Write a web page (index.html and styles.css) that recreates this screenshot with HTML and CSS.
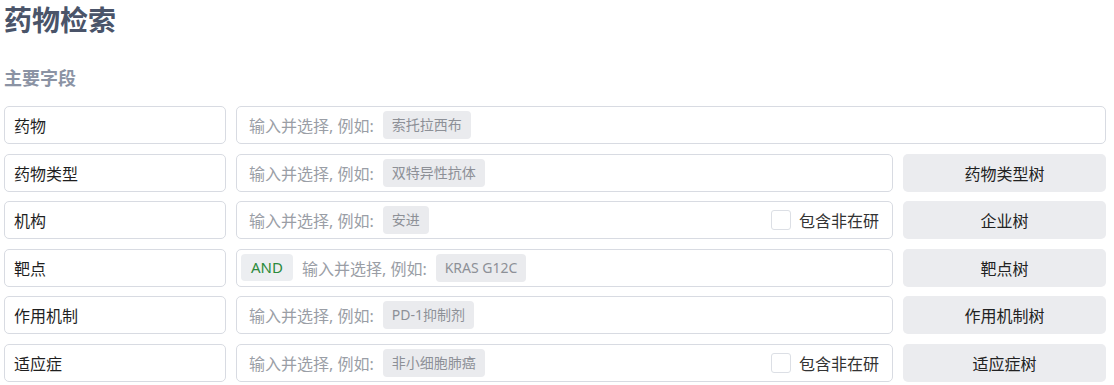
FILE: index.html
```html
<!DOCTYPE html>
<html lang="zh-CN">
<head>
  <meta charset="UTF-8" />
  <meta name="viewport" content="width=device-width, initial-scale=1.0" />
  <title>药物检索</title>
  <link rel="stylesheet" href="styles.css">
</head>
<body>
  <div class="page">
    <h1 class="title">药物检索</h1>
    <h2 class="section-title">主要字段</h2>

    <div class="fields">
      <div class="field-label">药物</div>
      <div class="field-input wide">
        <span class="placeholder">输入并选择, 例如:</span>
        <span class="chip">索托拉西布</span>
      </div>

      <div class="field-label">药物类型</div>
      <div class="field-input">
        <span class="placeholder">输入并选择, 例如:</span>
        <span class="chip">双特异性抗体</span>
      </div>
      <button class="tree-btn">药物类型树</button>

      <div class="field-label">机构</div>
      <div class="field-input">
        <span class="placeholder">输入并选择, 例如:</span>
        <span class="chip">安进</span>
        <label class="check"><span class="box"></span>包含非在研</label>
      </div>
      <button class="tree-btn">企业树</button>

      <div class="field-label">靶点</div>
      <div class="field-input">
        <span class="logic">AND</span>
        <span class="placeholder">输入并选择, 例如:</span>
        <span class="chip">KRAS G12C</span>
      </div>
      <button class="tree-btn">靶点树</button>

      <div class="field-label">作用机制</div>
      <div class="field-input">
        <span class="placeholder">输入并选择, 例如:</span>
        <span class="chip">PD-1抑制剂</span>
      </div>
      <button class="tree-btn">作用机制树</button>

      <div class="field-label">适应症</div>
      <div class="field-input">
        <span class="placeholder">输入并选择, 例如:</span>
        <span class="chip">非小细胞肺癌</span>
        <label class="check"><span class="box"></span>包含非在研</label>
      </div>
      <button class="tree-btn">适应症树</button>
    </div>
  </div>
</body>
</html>
```

FILE: styles.css
```css
body {
  margin: 0;
  font-family: "Noto Sans", "Noto Sans CJK SC", sans-serif;
  background: #fff;
  color: #222;
}
.page {
  padding: 0 8px 0 4px;
}
.title {
  margin: 0;
  font-size: 28px;
  line-height: 40px;
  font-weight: bold;
  color: #4a5469;
}
.section-title {
  margin: 25px 0 15px;
  font-size: 18px;
  line-height: 26px;
  font-weight: bold;
  color: #8b93a4;
}
.fields {
  display: grid;
  grid-template-columns: 222px 1fr 203px;
  grid-auto-rows: 38px;
  column-gap: 10px;
  row-gap: 9.6px;
}
.field-label {
  border: 1px solid #d8dbe2;
  border-radius: 5px;
  display: flex;
  align-items: center;
  padding: 0 9px;
  font-size: 16px;
  color: #1f1f1f;
}
.field-input {
  border: 1px solid #d8dbe2;
  border-radius: 5px;
  display: flex;
  align-items: center;
  gap: 9px;
  padding: 0 13px 0 12px;
  font-size: 16px;
}
.field-input.wide {
  grid-column: span 2;
}
.placeholder {
  color: #9a9ea6;
}
.chip {
  background: #eaebee;
  color: #8d9097;
  font-size: 14px;
  height: 28px;
  line-height: 28px;
  padding: 0 9px;
  border-radius: 4px;
}
.logic {
  background: #eceef1;
  color: #2b8a3b;
  font-size: 15px;
  height: 27px;
  line-height: 27px;
  padding: 0 10px;
  border-radius: 4px;
  margin-left: -8px;
}
.check {
  margin-left: auto;
  display: flex;
  align-items: center;
  gap: 8px;
  color: #333;
  font-size: 16px;
}
.box {
  width: 18px;
  height: 18px;
  border: 1px solid #dcdfe5;
  border-radius: 3px;
  background: #fff;
}
.tree-btn {
  border: none;
  border-radius: 5px;
  background: #ebecef;
  color: #222;
  font-family: inherit;
  font-size: 16px;
  padding: 0;
}
```
